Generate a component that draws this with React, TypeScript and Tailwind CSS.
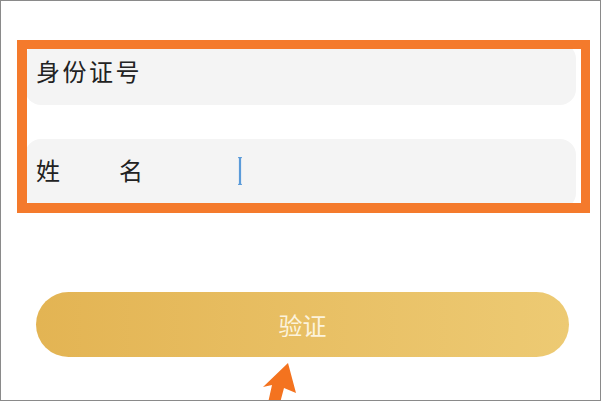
export default function App() {
    return (
        <div
            className="relative h-[401px] w-[601px] overflow-hidden border border-[#8a8a8a] bg-white"
            style={{ fontFamily: '"Noto Sans CJK SC", "Noto Sans", sans-serif' }}
        >
            <div className="flex flex-col pl-[24px] pt-[42px]">
                {/* id number */}
                <div className="h-[62px] w-[551px] rounded-2xl bg-[#f4f4f4] pl-[11px] pt-[16px]">
                    <span className="text-[24px] leading-none tracking-[2.5px] text-[#222]">身份证号</span>
                </div>

                {/* name */}
                <div className="mt-[34px] flex h-[70px] w-[551px] items-start rounded-2xl bg-[#f4f4f4] pl-[11px] pt-[19px]">
                    <span className="text-[24px] leading-none text-[#222]">姓</span>
                    <span className="ml-[59px] text-[24px] leading-none text-[#222]">名</span>
                    <svg className="ml-[94px] -mt-[2px]" width="6" height="30" viewBox="0 0 6 30">
                        <path d="M3 1 v28" stroke="#5b9bd9" strokeWidth="2.2" />
                        <path d="M1 1.5 q2 0 2 1.5 M5 1.5 q-2 0 -2 1.5 M1 28.5 q2 0 2 -1.5 M5 28.5 q-2 0 -2 -1.5" stroke="#5b9bd9" strokeWidth="1" fill="none" />
                    </svg>
                </div>

                <button
                    type="button"
                    className="ml-[11px] mt-[83px] h-[65px] w-[533px] rounded-full bg-gradient-to-r from-[#e3b453] to-[#edca73] text-[24px] leading-none text-[#fcf3dc]"
                >
                    验证
                </button>
            </div>

            {/* annotation box */}
            <div className="absolute left-[16px] top-[39px] h-[173px] w-[573px] border-[9px] border-b-[10px] border-l-[10px] border-[#f47a2c]" />

            {/* annotation arrow */}
            <svg className="absolute left-[249px] top-[354px]" width="60" height="48" viewBox="0 0 60 48">
                <polygon points="38,8 46,38 34,33 30,48 18,48 22,30 13,32" fill="#f4731f" />
            </svg>
        </div>
    );
}
